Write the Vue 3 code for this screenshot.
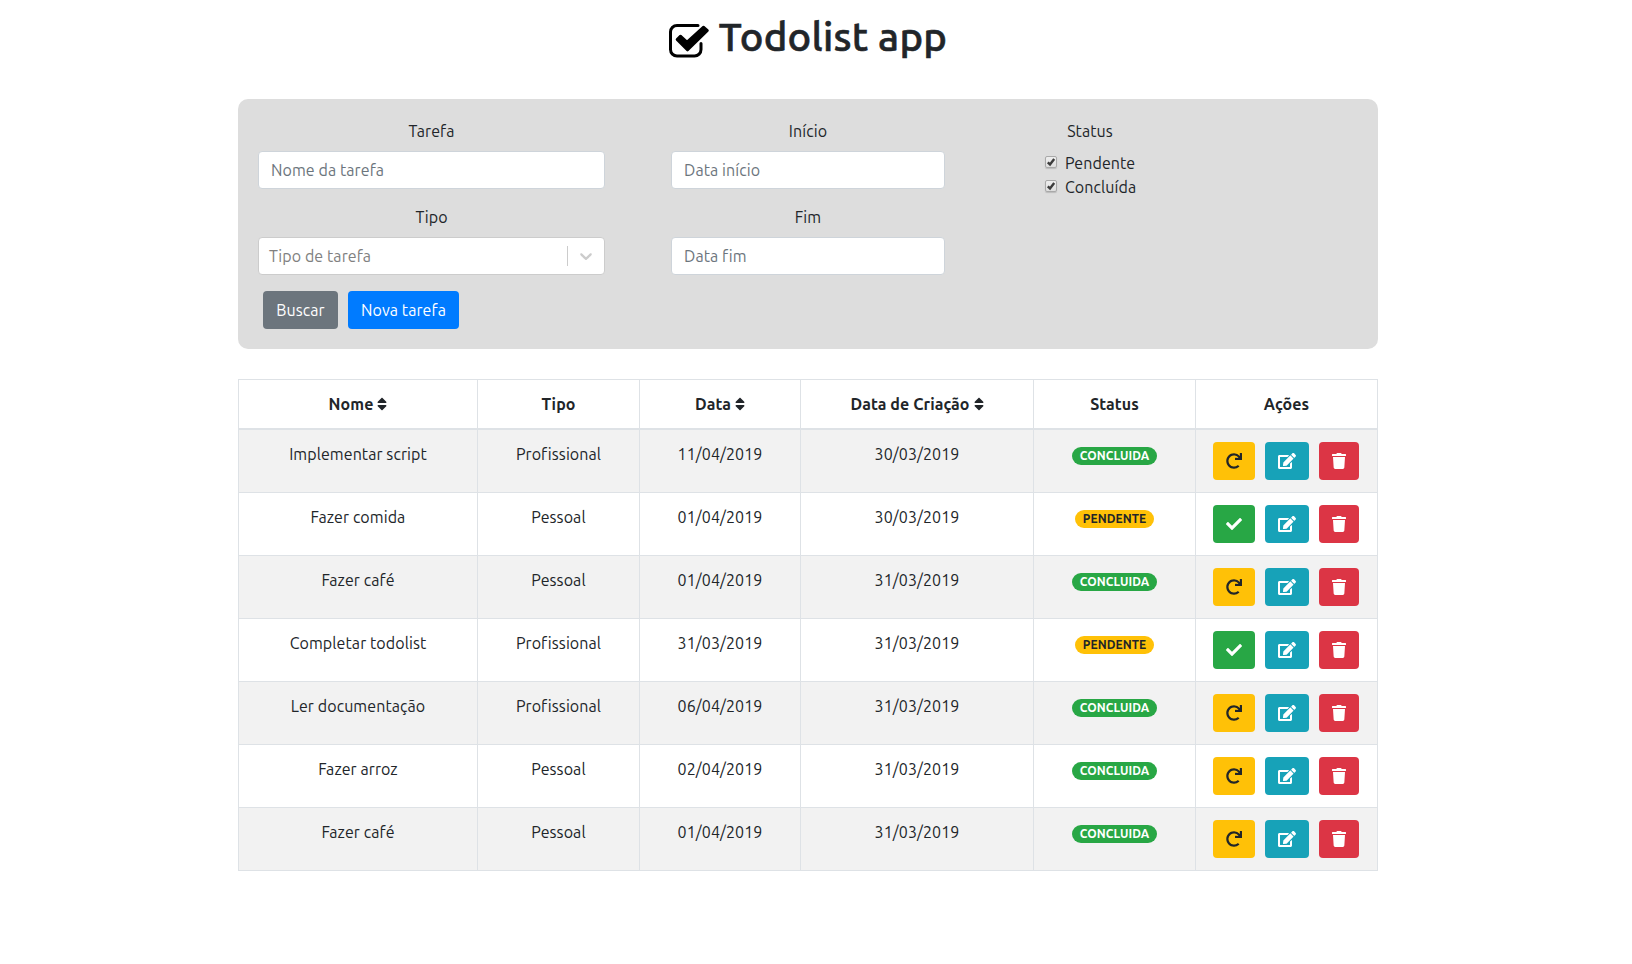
<script setup>
import { ref } from 'vue'

const icons = {
  redo: { w: 512, d: 'M500.33 0h-47.41a12 12 0 0 0-12 12.57l4 82.76A247.42 247.42 0 0 0 256 8C119.34 8 7.9 119.53 8 256.19 8.1 393.07 119.1 504 256 504a247.1 247.1 0 0 0 166.18-63.91 12 12 0 0 0 .48-17.43l-34-34a12 12 0 0 0-16.38-.55A176 176 0 1 1 402.1 157.8l-101.53-4.87a12 12 0 0 0-12.57 12v47.41a12 12 0 0 0 12 12h200.33a12 12 0 0 0 12-12V12a12 12 0 0 0-12-12z' },
  check: { w: 512, d: 'M173.898 439.404l-166.4-166.4c-9.997-9.997-9.997-26.206 0-36.204l36.203-36.204c9.997-9.998 26.207-9.998 36.204 0L192 312.69 432.095 72.596c9.997-9.997 26.207-9.997 36.204 0l36.203 36.204c9.997 9.997 9.997 26.206 0 36.204l-294.4 294.401c-9.998 9.997-26.207 9.997-36.204-.001z' },
  edit: { w: 576, d: 'M402.6 83.2l90.2 90.2c3.8 3.8 3.8 10 0 13.8L274.4 405.6l-92.8 10.3c-12.4 1.4-22.9-9.1-21.5-21.5l10.3-92.8L388.8 83.2c3.8-3.8 10-3.8 13.8 0zm162-22.9l-48.8-48.8c-15.2-15.2-39.9-15.2-55.2 0l-35.4 35.4c-3.8 3.8-3.8 10 0 13.8l90.2 90.2c3.8 3.8 10 3.8 13.8 0l35.4-35.4c15.2-15.3 15.2-40 0-55.2zM384 346.2V448H64V128h229.8c3.2 0 6.2-1.3 8.5-3.5l40-40c7.6-7.6 2.2-20.5-8.5-20.5H48C21.5 64 0 85.5 0 112v352c0 26.5 21.5 48 48 48h352c26.5 0 48-21.5 48-48V306.2c0-10.7-12.9-16-20.5-8.5l-40 40c-2.2 2.3-3.5 5.3-3.5 8.5z' },
  trash: { w: 448, d: 'M432 32H312l-9.4-18.7A24 24 0 0 0 281.1 0H166.8a23.72 23.72 0 0 0-21.4 13.3L136 32H16A16 16 0 0 0 0 48v32a16 16 0 0 0 16 16h416a16 16 0 0 0 16-16V48a16 16 0 0 0-16-16zM53.2 467a48 48 0 0 0 47.9 45h245.8a48 48 0 0 0 47.9-45L416 128H32z' },
}

const columns = [
  { label: 'Nome', sort: true, cls: 'c-name' },
  { label: 'Tipo', cls: 'c-type' },
  { label: 'Data', sort: true, cls: 'c-date' },
  { label: 'Data de Criação', sort: true, cls: 'c-created' },
  { label: 'Status', cls: 'c-status' },
  { label: 'Ações', cls: 'c-actions' },
]

const tasks = ref([
  { name: 'Implementar script', type: 'Profissional', date: '11/04/2019', created: '30/03/2019', done: true },
  { name: 'Fazer comida', type: 'Pessoal', date: '01/04/2019', created: '30/03/2019', done: false },
  { name: 'Fazer café', type: 'Pessoal', date: '01/04/2019', created: '31/03/2019', done: true },
  { name: 'Completar todolist', type: 'Profissional', date: '31/03/2019', created: '31/03/2019', done: false },
  { name: 'Ler documentação', type: 'Profissional', date: '06/04/2019', created: '31/03/2019', done: true },
  { name: 'Fazer arroz', type: 'Pessoal', date: '02/04/2019', created: '31/03/2019', done: true },
  { name: 'Fazer café', type: 'Pessoal', date: '01/04/2019', created: '31/03/2019', done: true },
])

const actions = (task) => [
  task.done ? { icon: 'redo', cls: 'warning' } : { icon: 'check', cls: 'success' },
  { icon: 'edit', cls: 'info' },
  { icon: 'trash', cls: 'danger' },
]

const statuses = ref([
  { label: 'Pendente', on: true },
  { label: 'Concluída', on: true },
])
</script>

<template>
  <div class="page">
    <h1 class="title">
      <svg class="logo" width="42" height="36" viewBox="0 0 42 36">
        <path d="M30 2.500H9A6.500 6.500 0 0 0 2.500 9V26.500A6.500 6.500 0 0 0 9 33H26.500A6.500 6.500 0 0 0 33 26.500V20.500" fill="none" stroke="#000" stroke-width="3" stroke-linecap="round" />
        <path d="M9 16.500L12.500 13L19 19L35.500 4L39.500 7.500L19.500 27Z" fill="#000" stroke="#000" stroke-width="2.600" stroke-linejoin="round" />
      </svg>
      <span>Todolist app</span>
    </h1>

    <form class="filters" @submit.prevent>
      <div class="fields">
        <div class="col wide">
          <label>Tarefa</label>
          <input class="control" placeholder="Nome da tarefa" />
          <label>Tipo</label>
          <div class="select">
            <span>Tipo de tarefa</span>
            <i class="sep"></i>
            <svg width="20" height="20" viewBox="0 0 20 20"><path fill="#ccc" d="M4.516 7.548c0.436-0.446 1.043-0.481 1.576 0l3.908 3.747 3.908-3.747c0.533-0.481 1.141-0.446 1.574 0 0.436 0.445 0.408 1.197 0 1.615-0.406 0.418-4.695 4.502-4.695 4.502-0.217 0.223-0.502 0.335-0.787 0.335s-0.57-0.112-0.789-0.335c0 0-4.287-4.084-4.695-4.502s-0.436-1.17 0-1.615z" /></svg>
          </div>
        </div>
        <div class="col mid">
          <label>Início</label>
          <input class="control" placeholder="Data início" />
          <label>Fim</label>
          <input class="control" placeholder="Data fim" />
        </div>
        <div class="col narrow">
          <label>Status</label>
          <div v-for="s in statuses" :key="s.label" class="check" @click="s.on = !s.on">
            <span class="box">
              <svg v-if="s.on" width="10" height="10" viewBox="0 0 10 10"><path d="M1.800 5.300L4 7.400L8.200 1.900" fill="none" stroke="#3c3c3c" stroke-width="2.400" /></svg>
            </span>
            <span>{{ s.label }}</span>
          </div>
        </div>
      </div>
      <div class="buttons">
        <button class="btn secondary">Buscar</button>
        <button class="btn primary">Nova tarefa</button>
      </div>
    </form>

    <table class="table">
      <thead>
        <tr>
          <th v-for="c in columns" :key="c.label" :class="c.cls">
            {{ c.label }}<svg v-if="c.sort" class="sort" width="10" height="16" viewBox="0 0 320 512"><path fill="currentColor" d="M41 288h238c21.400 0 32.100 25.900 17 41L177 448c-9.400 9.400-24.600 9.400-33.900 0L24 329c-15.100-15.100-4.400-41 17-41zm255-105L177 64c-9.400-9.400-24.600-9.400-33.900 0L24 183c-15.100 15.100-4.400 41 17 41h238c21.400 0 32.100-25.900 17-41z" /></svg>
          </th>
        </tr>
      </thead>
      <tbody>
        <tr v-for="(t, i) in tasks" :key="i">
          <td>{{ t.name }}</td>
          <td>{{ t.type }}</td>
          <td>{{ t.date }}</td>
          <td>{{ t.created }}</td>
          <td><span :class="['badge', t.done ? 'success' : 'warning']">{{ t.done ? 'CONCLUIDA' : 'PENDENTE' }}</span></td>
          <td>
            <div class="actions">
              <button v-for="a in actions(t)" :key="a.icon" :class="['btn', a.cls]">
                <svg height="16" :width="icons[a.icon].w / 32" :viewBox="`0 0 ${icons[a.icon].w} 512`"><path fill="currentColor" :d="icons[a.icon].d" /></svg>
              </button>
            </div>
          </td>
        </tr>
      </tbody>
    </table>
  </div>
</template>

<style>
body { margin: 0; background: #fff; }
</style>

<style scoped>
* { box-sizing: border-box; }
.page { width: 1140px; margin: 0 0 0 238px; font: 16px/24px Ubuntu, "Noto Sans", sans-serif; letter-spacing: 0.08px; color: #212529; text-align: center; }
.title { display: flex; justify-content: center; margin: 0; height: 99px; padding: 13px 1px 0 0; font-size: 40px; font-weight: 500; line-height: 48px; letter-spacing: 0.25px; -webkit-text-stroke: 0.6px #212529; }
.logo { margin: 10px 9px 0 0; }
.filters { height: 250px; padding: 20px 20px; border-radius: 10px; background: #ddd; }
.fields { display: flex; }
.col { display: flex; flex-direction: column; }
.wide { width: 347px; }
.mid { width: 274px; margin-left: 66px; }
.narrow { width: 90px; margin-left: 100px; }
label { height: 24px; margin-bottom: 8px; }
.control, .select { width: 100%; height: 38px; margin-bottom: 16px; border: 1px solid #ced4da; border-radius: 4px; background: #fff; }
.control { padding: 6px 12px; font: inherit; letter-spacing: inherit; color: #495057; outline: none; }
.control::placeholder { color: #6c757d; opacity: 1; }
.select { display: flex; align-items: center; padding: 0 8px 0 10px; border-color: #ccc; color: #808080; }
.sep { width: 1px; height: 20px; margin: 0 8px 0 auto; background: #ccc; }
.check { display: flex; align-items: center; height: 24px; white-space: nowrap; }
.box { display: flex; flex: none; width: 12px; height: 12px; margin: -2px 8px 0 0; border: 1px solid #a9a9a9; border-radius: 2px; background: linear-gradient(#eee, #dedede); box-shadow: 0 1px 1px #bbb; }
.buttons { display: flex; gap: 10px; padding-left: 5px; }
.btn { height: 38px; padding: 0 13px; border: 0; border-radius: 4px; font: inherit; letter-spacing: inherit; color: #fff; white-space: nowrap; }
.btn svg { display: block; }
.secondary, .primary { padding: 0; }
.secondary { width: 75px; background: #6c757d; }
.primary { width: 111px; background: #007bff; }
.table { width: 1140px; margin-top: 30px; table-layout: fixed; border-collapse: separate; border-spacing: 0; border: solid #dee2e6; border-width: 1px 0 0 1px; }
th, td { padding: 12px 0; border: solid #dee2e6; border-width: 0 1px 1px 0; vertical-align: top; }
th { height: 50px; border-bottom-width: 2px; font-weight: 700; white-space: nowrap; }
td { height: 63px; }
tbody tr:nth-child(odd) { background: #f2f2f2; }
.c-name { width: 239px; }
.c-type { width: 162px; }
.c-date { width: 161px; }
.c-created { width: 233px; }
.c-status { width: 162px; }
.c-actions { width: 182px; }
.sort { margin-left: 4px; vertical-align: -2px; }
.badge { display: inline-block; height: 18px; margin-top: 5px; border-radius: 10px; font-size: 12px; font-weight: 700; line-height: 18px; vertical-align: top; }
.badge.success { width: 85px; }
.badge.warning { width: 79px; }
.actions { display: flex; justify-content: center; gap: 10px; padding-right: 1px; }
.success { background: #28a745; color: #fff; }
.btn.warning, .warning { background: #ffc107; color: #212529; }
.info { background: #17a2b8; }
.danger { background: #dc3545; }
</style>
